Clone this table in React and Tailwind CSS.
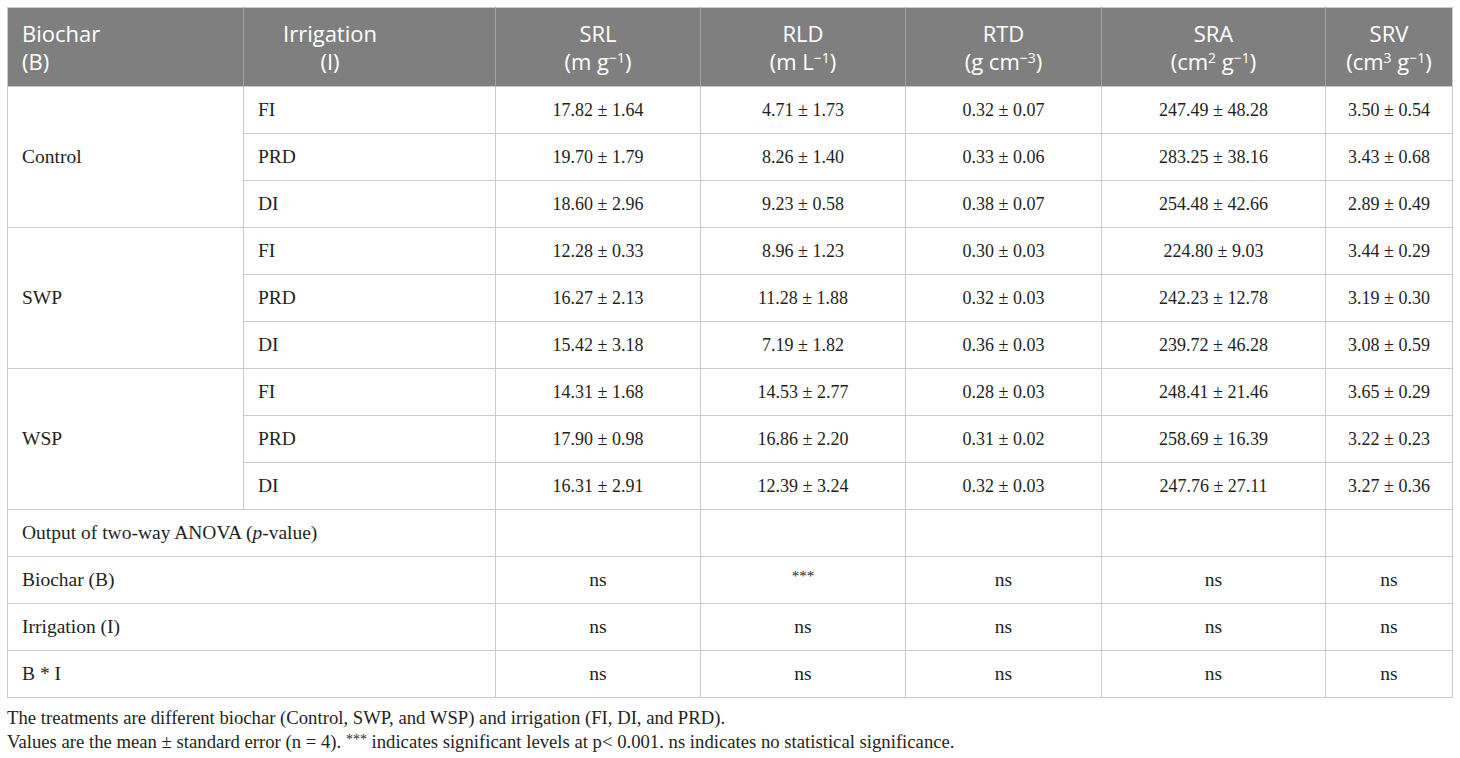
import React from 'react'

const groups = [
  {
    name: 'Control',
    rows: [
      ['FI', '17.82 ± 1.64', '4.71 ± 1.73', '0.32 ± 0.07', '247.49 ± 48.28', '3.50 ± 0.54'],
      ['PRD', '19.70 ± 1.79', '8.26 ± 1.40', '0.33 ± 0.06', '283.25 ± 38.16', '3.43 ± 0.68'],
      ['DI', '18.60 ± 2.96', '9.23 ± 0.58', '0.38 ± 0.07', '254.48 ± 42.66', '2.89 ± 0.49'],
    ],
  },
  {
    name: 'SWP',
    rows: [
      ['FI', '12.28 ± 0.33', '8.96 ± 1.23', '0.30 ± 0.03', '224.80 ± 9.03', '3.44 ± 0.29'],
      ['PRD', '16.27 ± 2.13', '11.28 ± 1.88', '0.32 ± 0.03', '242.23 ± 12.78', '3.19 ± 0.30'],
      ['DI', '15.42 ± 3.18', '7.19 ± 1.82', '0.36 ± 0.03', '239.72 ± 46.28', '3.08 ± 0.59'],
    ],
  },
  {
    name: 'WSP',
    rows: [
      ['FI', '14.31 ± 1.68', '14.53 ± 2.77', '0.28 ± 0.03', '248.41 ± 21.46', '3.65 ± 0.29'],
      ['PRD', '17.90 ± 0.98', '16.86 ± 2.20', '0.31 ± 0.02', '258.69 ± 16.39', '3.22 ± 0.23'],
      ['DI', '16.31 ± 2.91', '12.39 ± 3.24', '0.32 ± 0.03', '247.76 ± 27.11', '3.27 ± 0.36'],
    ],
  },
]

const anova = [
  ['Biochar (B)', 'ns', '***', 'ns', 'ns', 'ns'],
  ['Irrigation (I)', 'ns', 'ns', 'ns', 'ns', 'ns'],
  ['B * I', 'ns', 'ns', 'ns', 'ns', 'ns'],
]

const td = 'border border-[#cbcbcb] px-[14px] align-middle text-[19.5px]'
const num = 'border border-[#cbcbcb] px-[8px] align-middle text-center text-[18px]'
const th = 'border-x border-[#a3a3a3] font-normal align-middle'
const sup = 'text-[14px] leading-none relative -top-[7px]'

export default function App() {
  return (
    <div className="bg-white w-[1460px] h-[758px] pt-[7px] px-[7px] font-['Liberation_Serif',serif] text-[#231f20]">
      <table className="table-fixed border-collapse w-[1445px]">
        <colgroup>
          <col className="w-[236px]" />
          <col className="w-[252px]" />
          <col className="w-[205px]" />
          <col className="w-[205px]" />
          <col className="w-[196px]" />
          <col className="w-[224px]" />
          <col className="w-[127px]" />
        </colgroup>
        <thead className="font-['Open_Sans',sans-serif] text-[22px] leading-[28px] text-white">
          <tr className="h-[79px] bg-[#7f7f7f] border-t border-[#cbcbcb]">
            <th className={`${th} border-l-[#cbcbcb] text-left px-[14px]`}>
              Biochar
              <br />
              (B)
            </th>
            <th className={`${th} text-left pl-[39px]`}>
              <span className="inline-block text-center">
                Irrigation
                <br />
                (I)
              </span>
            </th>
            <th className={`${th} text-center`}>
              SRL
              <br />
              (m g<sup className={sup}>−1</sup>)
            </th>
            <th className={`${th} text-center`}>
              RLD
              <br />
              (m L<sup className={sup}>−1</sup>)
            </th>
            <th className={`${th} text-center`}>
              RTD
              <br />
              (g cm<sup className={sup}>−3</sup>)
            </th>
            <th className={`${th} text-center`}>
              SRA
              <br />
              (cm<sup className={sup}>2</sup> g<sup className={sup}>−1</sup>)
            </th>
            <th className={`${th} border-r-[#cbcbcb] text-center`}>
              SRV
              <br />
              (cm<sup className={sup}>3</sup> g<sup className={sup}>−1</sup>)
            </th>
          </tr>
        </thead>
        <tbody>
          {groups.map((g) =>
            g.rows.map((r, i) => (
              <tr key={g.name + r[0]} className="h-[47px]">
                {i === 0 && (
                  <td rowSpan={3} className={td}>
                    {g.name}
                  </td>
                )}
                <td className={td}>{r[0]}</td>
                {r.slice(1).map((v, j) => (
                  <td key={j} className={num}>
                    {v}
                  </td>
                ))}
              </tr>
            ))
          )}
          <tr className="h-[47px]">
            <td colSpan={2} className={td}>
              Output of two-way ANOVA (<i>p</i>-value)
            </td>
            <td className={num} />
            <td className={num} />
            <td className={num} />
            <td className={num} />
            <td className={num} />
          </tr>
          {anova.map((r) => (
            <tr key={r[0]} className="h-[47px]">
              <td colSpan={2} className={td}>
                {r[0]}
              </td>
              {r.slice(1).map((v, j) => (
                <td key={j} className={`${num} text-[19.5px]`}>
                  {v === '***' ? <span className="text-[15px] relative -top-[5px]">***</span> : v}
                </td>
              ))}
            </tr>
          ))}
        </tbody>
      </table>
      <div className="text-[18.7px] leading-[24px] pt-[8px]">
        <p>The treatments are different biochar (Control, SWP, and WSP) and irrigation (FI, DI, and PRD).</p>
        <p>
          Values are the mean ± standard error (n = 4). <span className="text-[14px] relative -top-[4px]">***</span> indicates significant levels at p&lt; 0.001. ns indicates no statistical significance.
        </p>
      </div>
    </div>
  )
}
